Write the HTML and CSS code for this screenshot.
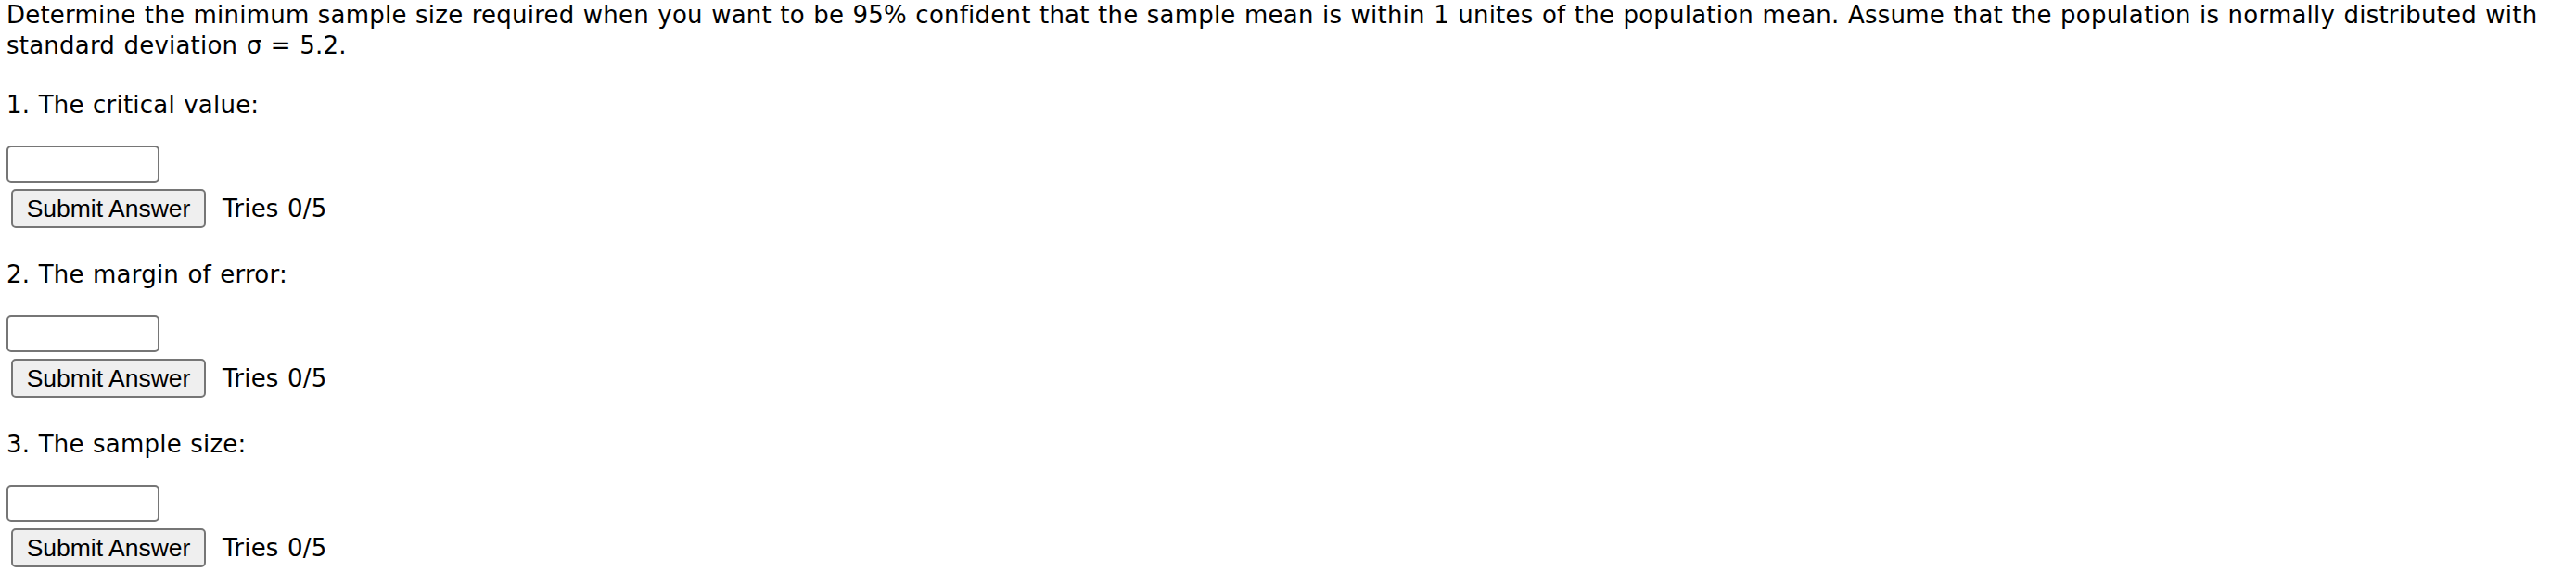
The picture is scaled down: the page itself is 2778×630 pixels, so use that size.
FILE: index.html
```html
<!DOCTYPE html>
<html lang="en">
<head>
<meta charset="utf-8">
<title>Sample size question</title>
<link rel="stylesheet" href="styles.css">
</head>
<body>
<div class="page">
  <p class="intro">Determine the minimum sample size required when you want to be 95% confident that the sample mean is within 1 unites of the population mean. Assume that the population is normally distributed with standard deviation σ = 5.2.</p>

  <div class="part">
    <p class="label">1. The critical value:</p>
    <input class="answer" type="text">
    <div class="submit-row">
      <button class="submit" type="button">Submit Answer</button>
      <span class="tries">Tries 0/5</span>
    </div>
  </div>

  <div class="part">
    <p class="label">2. The margin of error:</p>
    <input class="answer" type="text">
    <div class="submit-row">
      <button class="submit" type="button">Submit Answer</button>
      <span class="tries">Tries 0/5</span>
    </div>
  </div>

  <div class="part">
    <p class="label">3. The sample size:</p>
    <input class="answer" type="text">
    <div class="submit-row">
      <button class="submit" type="button">Submit Answer</button>
      <span class="tries">Tries 0/5</span>
    </div>
  </div>
</div>
</body>
</html>
```

FILE: styles.css
```css
html, body {
  margin: 0;
  padding: 0;
  background: #ffffff;
}

.page {
  padding: 0 8px 0 7px;
  font-family: "DejaVu Sans", Verdana, sans-serif;
  font-size: 26px;
  line-height: 33px;
  letter-spacing: 0.22px;
  word-spacing: 0.9px;
  color: #000000;
  display: flex;
  flex-direction: column;
  gap: 34px;
}

.intro {
  margin: 0 0 -3px 0;
}

.part {
  display: flex;
  flex-direction: column;
  align-items: flex-start;
}

.label {
  margin: 0 0 27px 0;
}

.answer {
  box-sizing: border-box;
  width: 165px;
  height: 40px;
  margin: 0 0 7px 0;
  padding: 0 6px;
  border: 2px solid #767676;
  border-radius: 5px;
  background: #ffffff;
  font-family: "Liberation Sans", Arial, sans-serif;
  font-size: 26px;
}

.submit-row {
  display: flex;
  align-items: center;
  gap: 18px;
  margin-left: 5px;
}

.submit {
  box-sizing: border-box;
  width: 210px;
  height: 42px;
  margin: 0;
  padding: 0 14px;
  border: 2px solid #767676;
  border-radius: 5px;
  background: #efefef;
  color: #000000;
  font-family: "Liberation Sans", Arial, sans-serif;
  font-size: 26.5px;
  line-height: 38px;
  letter-spacing: 0;
  word-spacing: 0;
  text-align: center;
}

.tries {
  line-height: 33px;
}
```
